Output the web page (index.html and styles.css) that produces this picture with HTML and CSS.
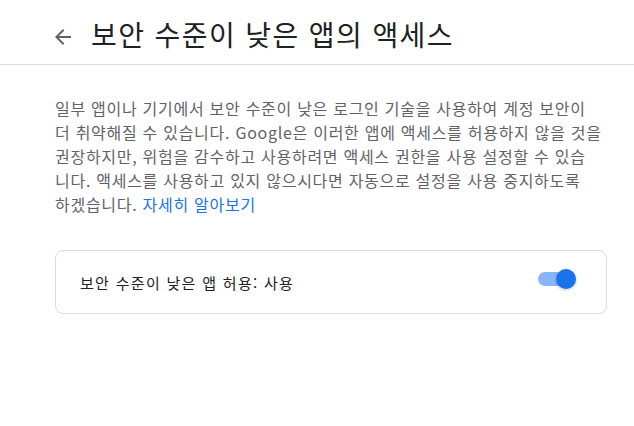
FILE: index.html
```html
<!DOCTYPE html>
<html lang="ko">
<head>
<meta charset="utf-8">
<link rel="stylesheet" href="styles.css">
</head>
<body>
<header class="topbar">
  <span class="back" aria-label="뒤로">
    <svg width="24" height="24" viewBox="0 0 24 24"><path d="M20 11H7.83l5.59-5.59L12 4l-8 8 8 8 1.41-1.41L7.83 13H20v-2z" fill="#5f6368"/></svg>
  </span>
  <h1 class="title">보안 수준이 낮은 앱의 액세스</h1>
</header>
<main class="content">
  <p class="desc">일부 앱이나 기기에서 보안 수준이 낮은 로그인 기술을 사용하여 계정 보안이<br>더 취약해질 수 있습니다. Google은 이러한 앱에 액세스를 허용하지 않을 것을<br>권장하지만, 위험을 감수하고 사용하려면 액세스 권한을 사용 설정할 수 있습<br>니다. 액세스를 사용하고 있지 않으시다면 자동으로 설정을 사용 중지하도록<br>하겠습니다. <a class="link" href="#">자세히 알아보기</a></p>
  <div class="card">
    <span class="card-label">보안 수준이 낮은 앱 허용: 사용</span>
    <span class="toggle"><span class="track"></span><span class="knob"></span></span>
  </div>
</main>
</body>
</html>
```
FILE: styles.css
```css
html, body {
  margin: 0;
  padding: 0;
  background: #fff;
  font-family: "Noto Sans CJK KR", "Noto Sans", sans-serif;
}
.topbar {
  height: 64px;
  border-bottom: 1px solid #dadce0;
  display: flex;
  align-items: center;
  padding-left: 51px;
}
.back {
  display: flex;
  width: 24px;
  height: 24px;
  margin-top: 10px;
}
.title {
  margin: 3px 0 0 16px;
  font-size: 28px;
  font-weight: 400;
  letter-spacing: 1.4px;
  color: #202124;
  line-height: 36px;
}
.content {
  padding: 31px 27px 0 55px;
}
.desc {
  margin: 0;
  font-size: 16px;
  letter-spacing: 0.72px;
  line-height: 24px;
  color: #5f6368;
  white-space: nowrap;
}
.link {
  color: #1a73e8;
  text-decoration: none;
}
.card {
  margin-top: 34px;
  height: 62px;
  border: 1px solid #dadce0;
  border-radius: 8px;
  display: flex;
  align-items: center;
  justify-content: space-between;
  padding: 0 32px 0 24px;
}
.card-label {
  font-size: 15px;
  letter-spacing: 1.3px;
  color: #202124;
}
.toggle {
  position: relative;
  width: 36px;
  height: 20px;
  display: flex;
  align-items: center;
  margin-top: -6px;
}
.track {
  width: 34px;
  height: 14px;
  border-radius: 7px;
  background: #8ab4f8;
}
.knob {
  position: absolute;
  right: -2px;
  top: 0;
  width: 20px;
  height: 20px;
  border-radius: 50%;
  background: #1a73e8;
  box-shadow: 0 1px 3px rgba(60,64,67,0.3);
}
```
